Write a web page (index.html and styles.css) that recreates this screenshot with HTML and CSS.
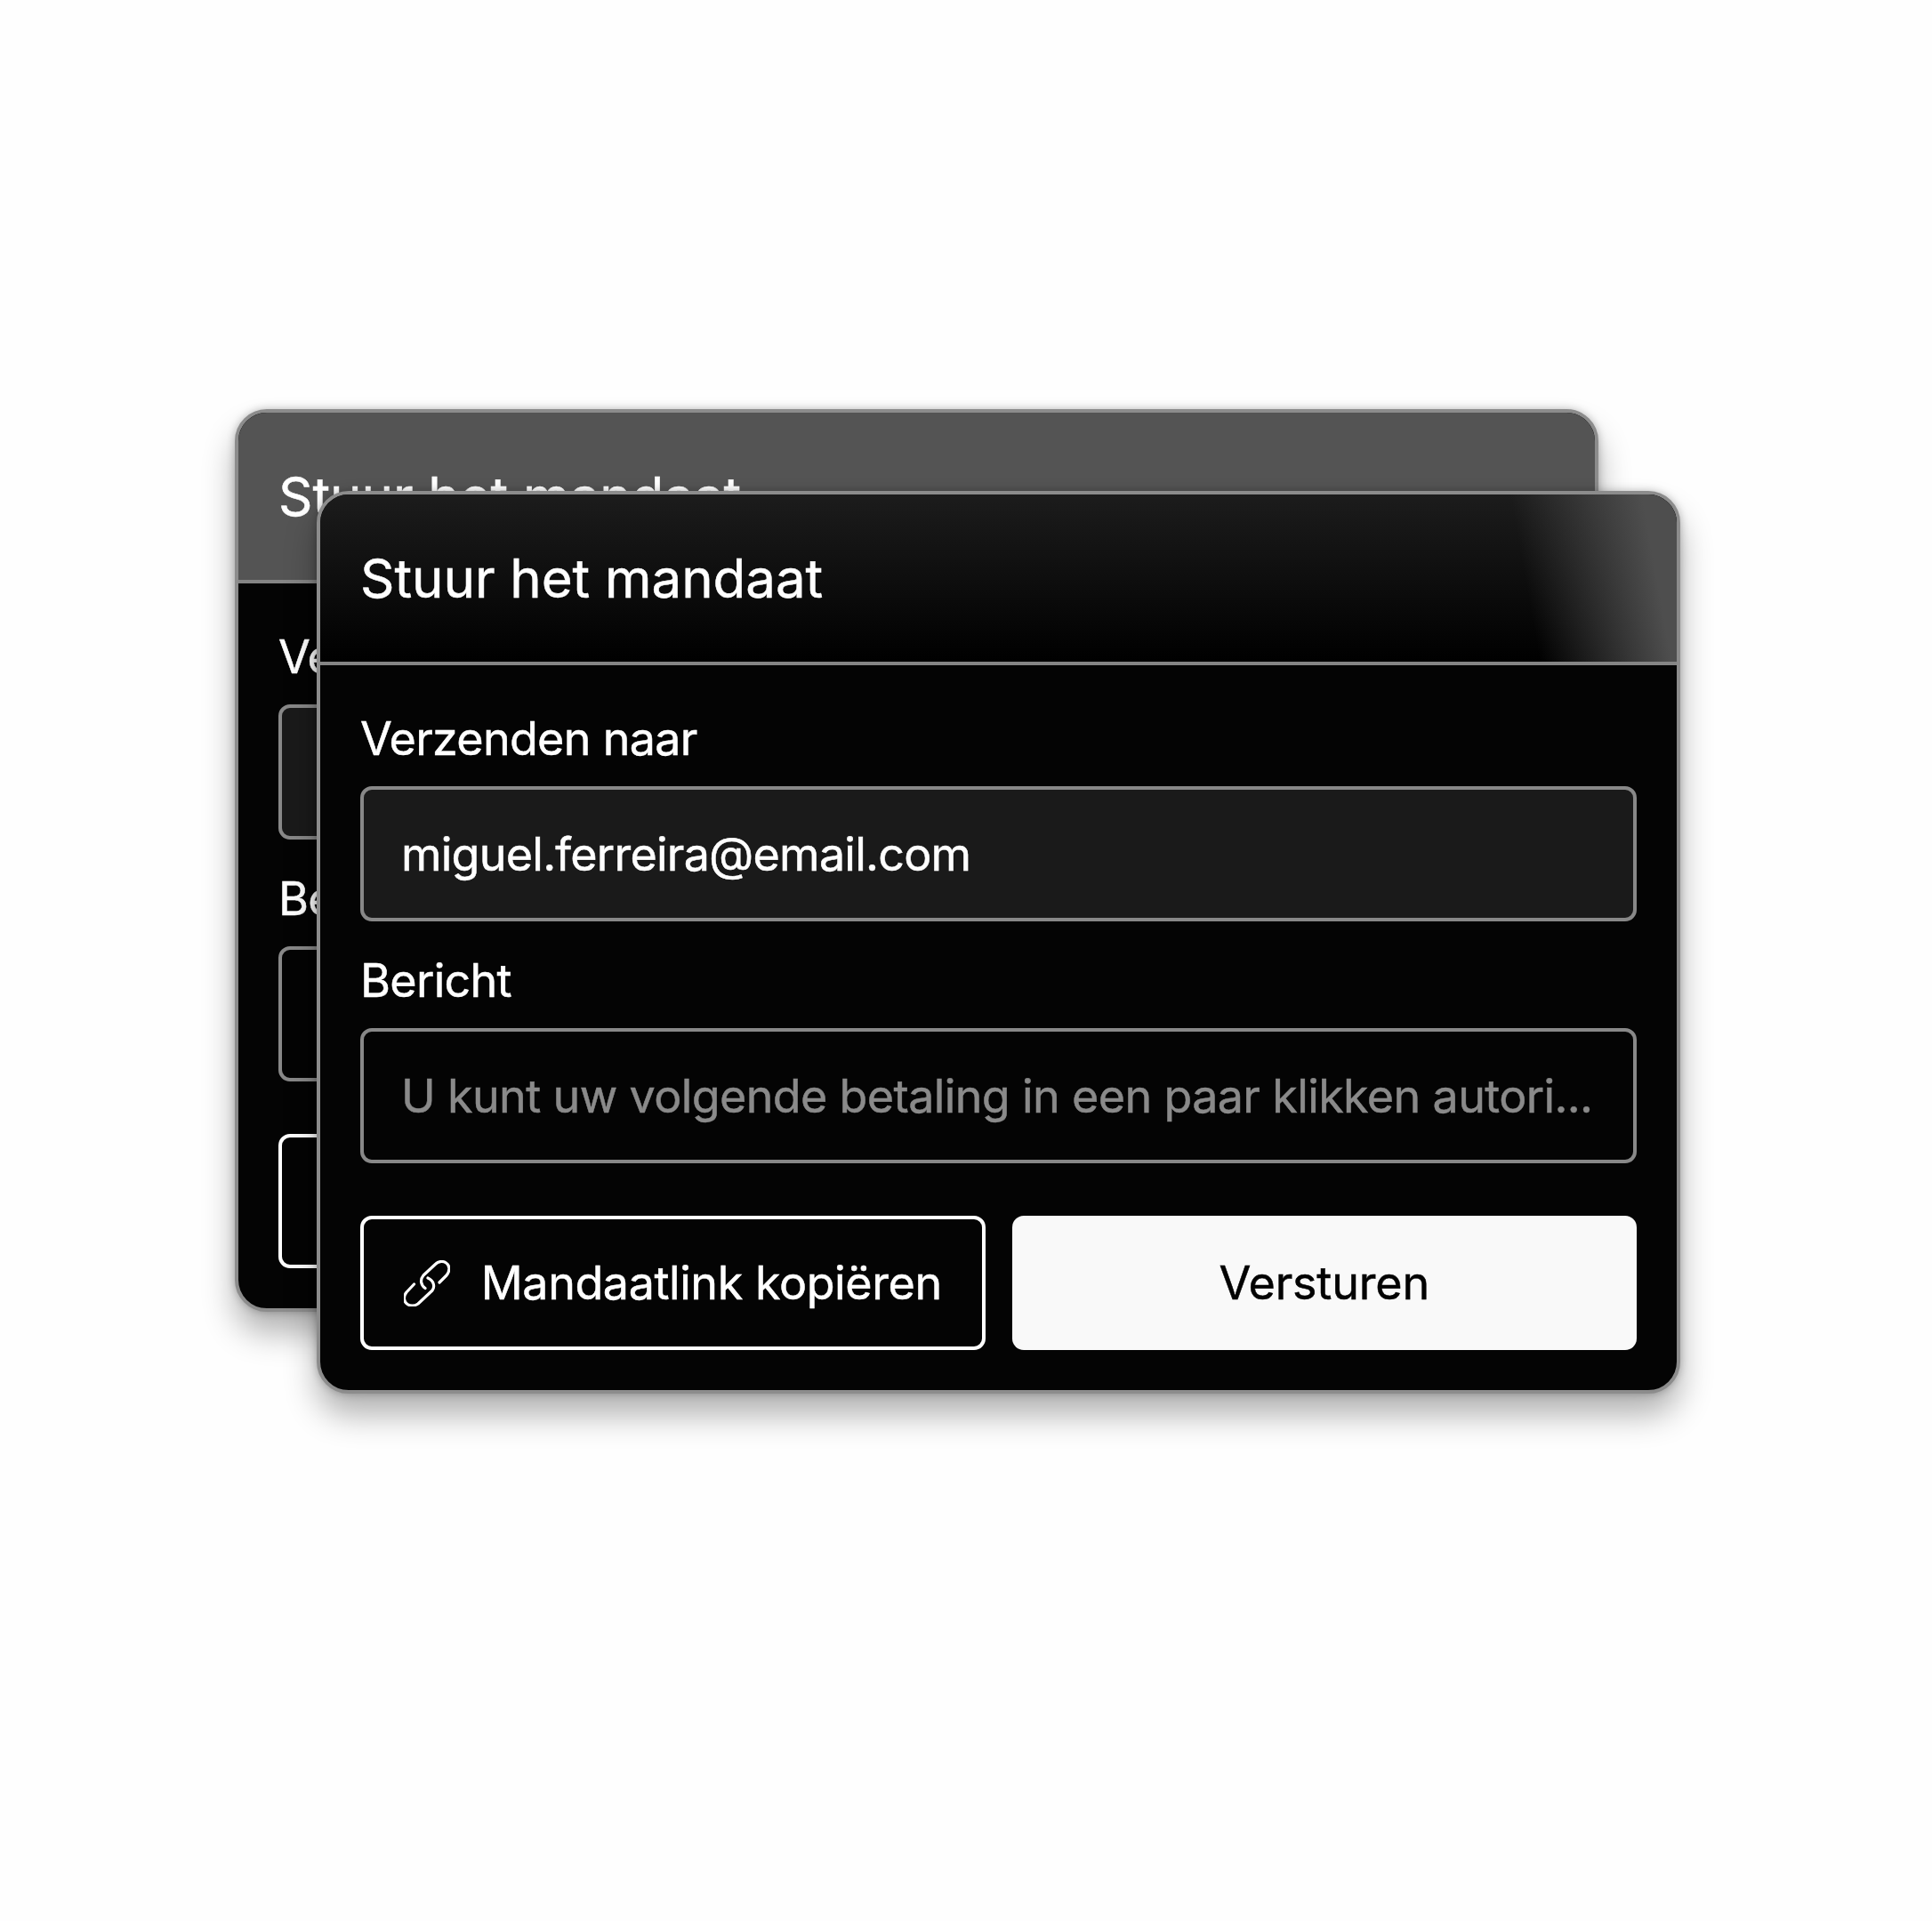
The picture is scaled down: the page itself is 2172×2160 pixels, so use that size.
FILE: index.html
```html
<!DOCTYPE html>
<html lang="nl">
<head>
<meta charset="utf-8">
<title>Stuur het mandaat</title>
<link rel="stylesheet" href="styles.css">
</head>
<body>
<main class="stage">
  <section class="card card-back">
    <header class="card-head"><h2 class="card-title">Stuur het mandaat</h2></header>
    <div class="card-body">
      <div class="field">
        <label class="field-label">Verzenden naar</label>
        <div class="input input-filled">miguel.ferreira@email.com</div>
      </div>
      <div class="field">
        <label class="field-label">Bericht</label>
        <div class="input input-hint">U kunt uw volgende betaling in een paar klikken autori...</div>
      </div>
      <div class="actions">
        <div class="btn btn-outline">
          <svg class="btn-icon" viewBox="26 16 52 52" aria-hidden="true"><path d="M66 41 L74 33 C78 28 78 22 73.5 19 C69 16 64 18 62 20 L48 33 C44 38 45 44 50 47.5"/><path d="M37.5 43 L29 52 C25 57 26 63 30 65.5 C34 68 39 67 42 65 L58 50 C61 46 60 39 53 36"/></svg>
          <span>Mandaatlink kopiëren</span>
        </div>
        <div class="btn btn-solid">Versturen</div>
      </div>
    </div>
  </section>
  <section class="card card-front">
    <header class="card-head"><h2 class="card-title">Stuur het mandaat</h2></header>
    <div class="card-body">
      <div class="field">
        <label class="field-label">Verzenden naar</label>
        <div class="input input-filled">miguel.ferreira@email.com</div>
      </div>
      <div class="field">
        <label class="field-label">Bericht</label>
        <div class="input input-hint">U kunt uw volgende betaling in een paar klikken autori...</div>
      </div>
      <div class="actions">
        <div class="btn btn-outline">
          <svg class="btn-icon" viewBox="26 16 52 52" aria-hidden="true"><path d="M66 41 L74 33 C78 28 78 22 73.5 19 C69 16 64 18 62 20 L48 33 C44 38 45 44 50 47.5"/><path d="M37.5 43 L29 52 C25 57 26 63 30 65.5 C34 68 39 67 42 65 L58 50 C61 46 60 39 53 36"/></svg>
          <span>Mandaatlink kopiëren</span>
        </div>
        <div class="btn btn-solid">Versturen</div>
      </div>
    </div>
  </section>
</main>
</body>
</html>
```
FILE: styles.css
```css
* { box-sizing: border-box; }
html, body { margin: 0; padding: 0; }
body {
  background: #fefefe;
  font-family: "Inter", "Liberation Sans", sans-serif;
  font-weight: 400;
  -webkit-text-stroke: 0.5px currentColor;
  color: #fff;
}
.stage {
  position: relative;
  width: 2172px;
  height: 2160px;
  overflow: hidden;
}
.card {
  position: absolute;
  width: 1533px;
  height: 1015px;
  display: flex;
  flex-direction: column;
  background: #040404;
  border: 4px solid #8c8c8c;
  border-radius: 36px;
  overflow: hidden;
  box-shadow: 0 0 10px rgba(0,0,0,.25), 0 24px 36px rgba(0,0,0,.3);
}
.card-back { left: 264px; top: 460px; }
.card-front { left: 356px; top: 552px; }
.card-head {
  height: 192px;
  flex: none;
  display: flex;
  align-items: center;
  padding: 0 45px;
  border-bottom: 4px solid #858585;
}
.card-back .card-head { background: #545454; }
.card-front .card-head {
  background:
    linear-gradient(80deg, rgba(78,78,78,0) 88%, #4e4e4e 97.5%),
    linear-gradient(180deg, #1c1c1c 0%, #000 100%);
}
.card-title {
  margin: 0;
  font-size: 60px;
  font-weight: 400;
  line-height: 72px;
  letter-spacing: -0.05px;
}
.card-body {
  flex: 1;
  display: flex;
  flex-direction: column;
  gap: 37px;
  padding: 53px 45px 0;
}
.field {
  display: flex;
  flex-direction: column;
  gap: 23px;
}
.field-label {
  font-size: 52px;
  line-height: 60px;
  letter-spacing: -0.7px;
}
.input {
  height: 152px;
  display: flex;
  align-items: center;
  padding: 0 42px;
  border: 4px solid #888;
  border-radius: 13px;
  font-size: 52px;
  white-space: nowrap;
  overflow: hidden;
}
.input-filled { background: #1a1a1a; color: #fff; letter-spacing: -0.76px; }
.input-hint { background: #040404; color: #8a8a8a; letter-spacing: -0.63px; }
.actions {
  display: grid;
  grid-template-columns: 1fr 1fr;
  gap: 30px;
  margin-top: 22px;
}
.btn {
  height: 151px;
  display: flex;
  align-items: center;
  justify-content: center;
  border-radius: 13px;
  font-size: 52px;
}
.btn-outline {
  gap: 35px;
  border: 4px solid #fff;
  color: #fff;
  background: #040404;
  letter-spacing: -0.42px;
}
.btn-solid {
  background: #f9f9f9;
  color: #030303;
  letter-spacing: -0.15px;
}
.btn-icon {
  width: 52px;
  height: 52px;
  flex: none;
  fill: none;
  stroke: #fff;
  stroke-width: 3.2;
  stroke-linecap: round;
  stroke-linejoin: round;
}
```
